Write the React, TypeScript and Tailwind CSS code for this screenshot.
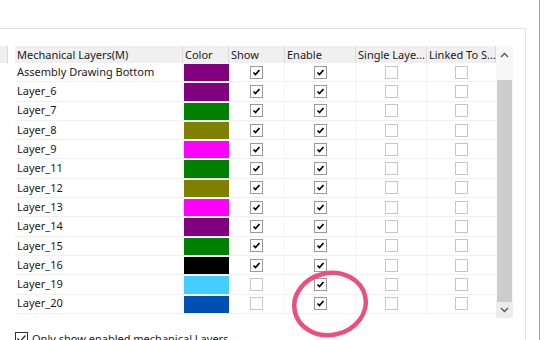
import React from "react";

type Row = { name: string; color: string; show: boolean; enable: boolean };

const rows: Row[] = [
  { name: "Assembly Drawing Bottom", color: "#800080", show: true, enable: true },
  { name: "Layer_6", color: "#800080", show: true, enable: true },
  { name: "Layer_7", color: "#008000", show: true, enable: true },
  { name: "Layer_8", color: "#808000", show: true, enable: true },
  { name: "Layer_9", color: "#ff00ff", show: true, enable: true },
  { name: "Layer_11", color: "#008000", show: true, enable: true },
  { name: "Layer_12", color: "#808000", show: true, enable: true },
  { name: "Layer_13", color: "#ff00ff", show: true, enable: true },
  { name: "Layer_14", color: "#800080", show: true, enable: true },
  { name: "Layer_15", color: "#008000", show: true, enable: true },
  { name: "Layer_16", color: "#000000", show: true, enable: true },
  { name: "Layer_19", color: "#44cdff", show: false, enable: true },
  { name: "Layer_20", color: "#0050b4", show: false, enable: true },
];

function Box({ checked }: { checked: boolean }) {
  return (
    <div
      className={
        "w-[13px] h-[13px] border bg-white flex items-center justify-center " +
        (checked ? "border-[#9a9a9a]" : "border-[#c6c6c6]")
      }
    >
      {checked && (
        <svg width="11" height="11" viewBox="0 0 11 11">
          <path d="M2.5 5.5 L4.5 7.5 L8.5 3" fill="none" stroke="#000" strokeWidth="1.7" />
        </svg>
      )}
    </div>
  );
}

export default function App() {
  return (
    <div
      className="w-[545px] h-[340px] bg-white overflow-hidden flex relative text-[#1a1a1a]"
      style={{ fontFamily: '"Noto Sans", "Open Sans", sans-serif' }}
    >
      <div className="w-[539px] flex flex-col">
        <div className="h-[28px] shrink-0" />
        <div className="w-[526px] flex-1 border-t border-r border-[#e2e2e2] pt-[17px] flex flex-col">
          <div className="flex">
            <div className="w-[8px] h-[17px] bg-[#f0f0f0] border-r border-[#d8d8d8] shrink-0" />
            <div className="w-[7px] shrink-0" />
            <div className="w-[481px] shrink-0">
              <div className="flex h-[17px] bg-[#f0f0f0] text-[11px] leading-[17px]">
                <div className="w-[168px] pl-[2px] border-r border-[#dcdcdc]">Mechanical Layers(M)</div>
                <div className="w-[46px] pl-[2px] border-r border-[#dcdcdc]">Color</div>
                <div className="w-[56px] pl-[2px] border-r border-[#dcdcdc]">Show</div>
                <div className="w-[71px] pl-[2px] border-r border-[#dcdcdc]">Enable</div>
                <div className="w-[71px] pl-[2px] border-r border-[#dcdcdc] whitespace-nowrap">Single Laye...</div>
                <div className="w-[69px] pl-[2px] border-r border-[#dcdcdc] whitespace-nowrap">Linked To S...</div>
              </div>
              {rows.map((r) => (
                <div key={r.name} className="flex h-[19.3px] border-b border-[#f0f0f0] text-[11px]">
                  <div className="w-[168px] pl-[2px] flex items-center border-r border-[#f6f6f6]">{r.name}</div>
                  <div className="w-[46px] flex items-stretch pl-px pt-px">
                    <div className="flex-1" style={{ backgroundColor: r.color }} />
                  </div>
                  <div className="w-[56px] flex items-center justify-center border-r border-[#f6f6f6]">
                    <Box checked={r.show} />
                  </div>
                  <div className="w-[71px] flex items-center justify-center border-r border-[#f6f6f6]">
                    <Box checked={r.enable} />
                  </div>
                  <div className="w-[71px] flex items-center justify-center border-r border-[#f6f6f6]">
                    <Box checked={false} />
                  </div>
                  <div className="w-[69px] flex items-center justify-center">
                    <Box checked={false} />
                  </div>
                </div>
              ))}
            </div>
            <div className="w-[17px] shrink-0 flex flex-col bg-[#f7f7f7]">
              <div className="h-[17px] flex items-center justify-center">
                <svg width="9" height="6" viewBox="0 0 9 6">
                  <path d="M1 5 L4.5 1.5 L8 5" fill="none" stroke="#555" strokeWidth="1.4" />
                </svg>
              </div>
              <div className="h-[17px]" />
              <div className="h-[222px] bg-[#cdcdcd] mx-px" />
              <div className="h-[16px] bg-[#ececec] flex items-center justify-center">
                <svg width="9" height="6" viewBox="0 0 9 6">
                  <path d="M1 1 L4.5 4.5 L8 1" fill="none" stroke="#555" strokeWidth="1.4" />
                </svg>
              </div>
            </div>
          </div>
          <div className="flex items-center gap-[4px] pl-[15px] mt-[14px]">
            <div className="w-[13px] h-[13px] border border-[#333] flex items-center justify-center bg-white shrink-0">
              <svg width="11" height="11" viewBox="0 0 11 11">
                <path d="M1.5 5.5 L4.2 8.2 L9.5 2.5" fill="none" stroke="#222" strokeWidth="1.2" />
              </svg>
            </div>
            <span className="text-[11px] leading-[13px]">Only show enabled mechanical Layers</span>
          </div>
        </div>
      </div>
      <div className="w-px h-full bg-[#a0a0a0]" />
      <svg className="absolute left-[288px] top-[268px]" width="86" height="72" viewBox="0 0 86 72">
        <ellipse cx="42" cy="36" rx="36" ry="31" transform="rotate(-12 42 36)" fill="none" stroke="#ec4f7f" strokeWidth="4.5" />
      </svg>
    </div>
  );
}
